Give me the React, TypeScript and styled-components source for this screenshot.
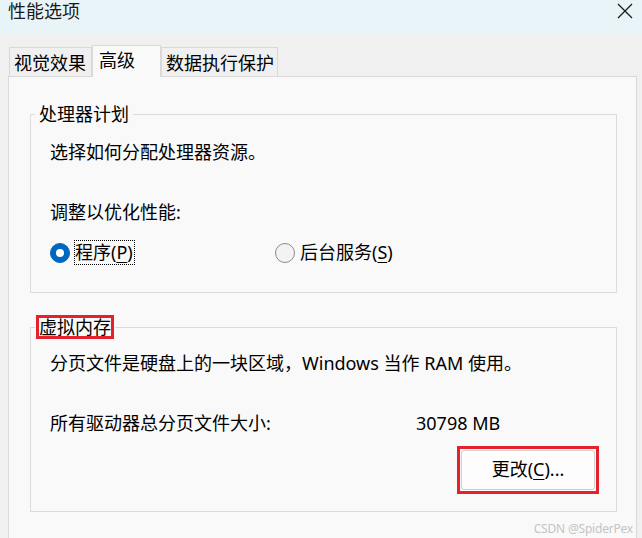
import React from "react";
import styled, { createGlobalStyle } from "styled-components";

const GlobalStyle = createGlobalStyle`
  html, body {
    margin: 0;
    padding: 0;
    background: #f0f0f0;
  }
  body {
    font-family: "Noto Sans", "Noto Sans CJK SC", sans-serif;
    color: #000;
  }
`;

const Window = styled.div`
  position: relative;
  width: 642px;
  height: 538px;
  display: flex;
  flex-direction: column;
  background: #f0f0f0;
  overflow: hidden;
`;

const TitleBar = styled.header`
  flex: none;
  height: 33px;
  box-sizing: border-box;
  display: flex;
  align-items: flex-start;
  justify-content: space-between;
  padding: 2px 9px 0 8px;
  background: #e9f4f9;
`;

const Title = styled.h1`
  margin: 0;
  font-size: 18px;
  font-weight: 400;
  line-height: 18px;
  color: #1a1a1a;
`;

const CloseButton = styled.button`
  margin-top: 1px;
  padding: 0;
  border: 0;
  background: none;
  width: 16px;
  height: 16px;
  display: flex;
`;

const Body = styled.main`
  flex: 1;
  display: flex;
  flex-direction: column;
  padding: 12px 5px 0 8px;
`;

const TabStrip = styled.div`
  display: flex;
  align-items: flex-end;
  height: 32px;
  padding-left: 1px;
  margin-bottom: -1px;
  position: relative;
  z-index: 1;
`;

const Tab = styled.div<{ $w: number; $active?: boolean }>`
  box-sizing: border-box;
  width: ${(p) => p.$w}px;
  height: ${(p) => (p.$active ? 32 : 29)}px;
  margin-bottom: ${(p) => (p.$active ? 0 : 1)}px;
  padding: ${(p) => (p.$active ? "0 0 4px 6px" : "2px 0 0 4px")};
  display: flex;
  align-items: center;
  border: 1px solid #d9d9d9;
  border-bottom: none;
  background: ${(p) => (p.$active ? "#f9f9f9" : "#f0f0f0")};
  font-size: 18px;
  line-height: 20px;
  white-space: nowrap;
`;

const Panel = styled.section`
  flex: 1;
  border: 1px solid #d9d9d9;
  border-bottom: none;
  background: #f9f9f9;
  padding: 25px 19px 0 21px;
`;

const Group = styled.fieldset<{ $gap?: number; $pb: number; $pt: number }>`
  margin: ${(p) => p.$gap ?? 0}px 0 0 0;
  min-width: 0;
  border: 1px solid #dcdcdc;
  padding: ${(p) => p.$pt}px 19px ${(p) => p.$pb}px 19px;
  font-size: 18px;
  line-height: 24px;
`;

const Legend = styled.legend`
  margin-left: -15px;
  padding: 0 4px;
  font-size: 18px;
  line-height: 24px;
`;

const Marked = styled.span`
  display: inline-block;
  line-height: 18px;
  margin-top: 2px;
  outline: 3px solid #e5212b;
  outline-offset: 0;
`;

const Line = styled.p<{ $mt?: number }>`
  margin: ${(p) => p.$mt ?? 0}px 0 0 0;
  font-size: 18px;
  line-height: 24px;
  white-space: nowrap;
`;

const RadioRow = styled.div`
  margin-top: 16px;
  display: grid;
  grid-template-columns: 225px auto;
  height: 24px;
`;

const RadioOption = styled.label`
  display: flex;
  align-items: center;
  gap: 4px;
`;

const RadioDot = styled.span<{ $checked?: boolean }>`
  box-sizing: border-box;
  width: 20px;
  height: 20px;
  border-radius: 50%;
  display: flex;
  align-items: center;
  justify-content: center;
  background: ${(p) => (p.$checked ? "#0067c0" : "#f3f3f3")};
  border: 1px solid ${(p) => (p.$checked ? "#0067c0" : "#8a8a8a")};

  &::after {
    content: "";
    display: ${(p) => (p.$checked ? "block" : "none")};
    width: 8px;
    height: 8px;
    border-radius: 50%;
    background: #fff;
  }
`;

const RadioLabel = styled.span<{ $focus?: boolean }>`
  border: 1px ${(p) => (p.$focus ? "dotted #000" : "solid transparent")};
  padding: 0 1px 0 0;
  font-size: 18px;
  line-height: 23px;
`;

const Key = styled.u`
  text-decoration-thickness: 1px;
  text-underline-offset: 3px;
`;

const SizeRow = styled.div`
  margin-top: 36px;
  display: grid;
  grid-template-columns: 366px auto;
  font-size: 18px;
  line-height: 24px;
`;

const ButtonRow = styled.div`
  margin-top: 11px;
  display: flex;
  justify-content: flex-end;
  margin-right: -2px;
`;

const ButtonFrame = styled.span`
  display: inline-flex;
  padding: 1px;
  border: 3px solid #e5212b;
`;

const Button = styled.button`
  width: 134px;
  height: 40px;
  box-sizing: border-box;
  border: 1px solid #d0d0d0;
  border-radius: 3px;
  background: #fdfdfd;
  font-family: inherit;
  font-size: 18px;
  line-height: 22px;
  color: #000;
  padding: 0 0 2px 0;
`;

const Watermark = styled.div`
  position: absolute;
  right: 9px;
  bottom: 2px;
  font-family: "Noto Sans", sans-serif;
  font-size: 12px;
  line-height: 14px;
  color: #c4c4c4;
  letter-spacing: -0.2px;
`;

export default function App() {
  return (
    <>
      <GlobalStyle />
      <Window>
        <TitleBar>
          <Title>性能选项</Title>
          <CloseButton aria-label="关闭">
            <svg width="16" height="16" viewBox="0 0 16 16">
              <path d="M1 1 L15 15 M15 1 L1 15" stroke="#1a1a1a" strokeWidth="1.3" fill="none" />
            </svg>
          </CloseButton>
        </TitleBar>
        <Body>
          <TabStrip>
            <Tab $w={83}>视觉效果</Tab>
            <Tab $w={69} $active>
              高级
            </Tab>
            <Tab $w={117}>数据执行保护</Tab>
          </TabStrip>
          <Panel>
            <Group $pt={14} $pb={28}>
              <Legend>处理器计划</Legend>
              <Line>选择如何分配处理器资源。</Line>
              <Line $mt={36}>调整以优化性能:</Line>
              <RadioRow>
                <RadioOption>
                  <RadioDot $checked />
                  <RadioLabel $focus>
                    程序(<Key>P</Key>)
                  </RadioLabel>
                </RadioOption>
                <RadioOption>
                  <RadioDot />
                  <RadioLabel>
                    后台服务(<Key>S</Key>)
                  </RadioLabel>
                </RadioOption>
              </RadioRow>
            </Group>
            <Group $gap={22} $pt={12} $pb={17}>
              <Legend>
                <Marked>虚拟内存</Marked>
              </Legend>
              <Line>分页文件是硬盘上的一块区域，Windows 当作 RAM 使用。</Line>
              <SizeRow>
                <span>所有驱动器总分页文件大小:</span>
                <span>30798 MB</span>
              </SizeRow>
              <ButtonRow>
                <ButtonFrame>
                  <Button>
                    更改(<Key>C</Key>)...
                  </Button>
                </ButtonFrame>
              </ButtonRow>
            </Group>
          </Panel>
        </Body>
        <Watermark>CSDN @SpiderPex</Watermark>
      </Window>
    </>
  );
}
